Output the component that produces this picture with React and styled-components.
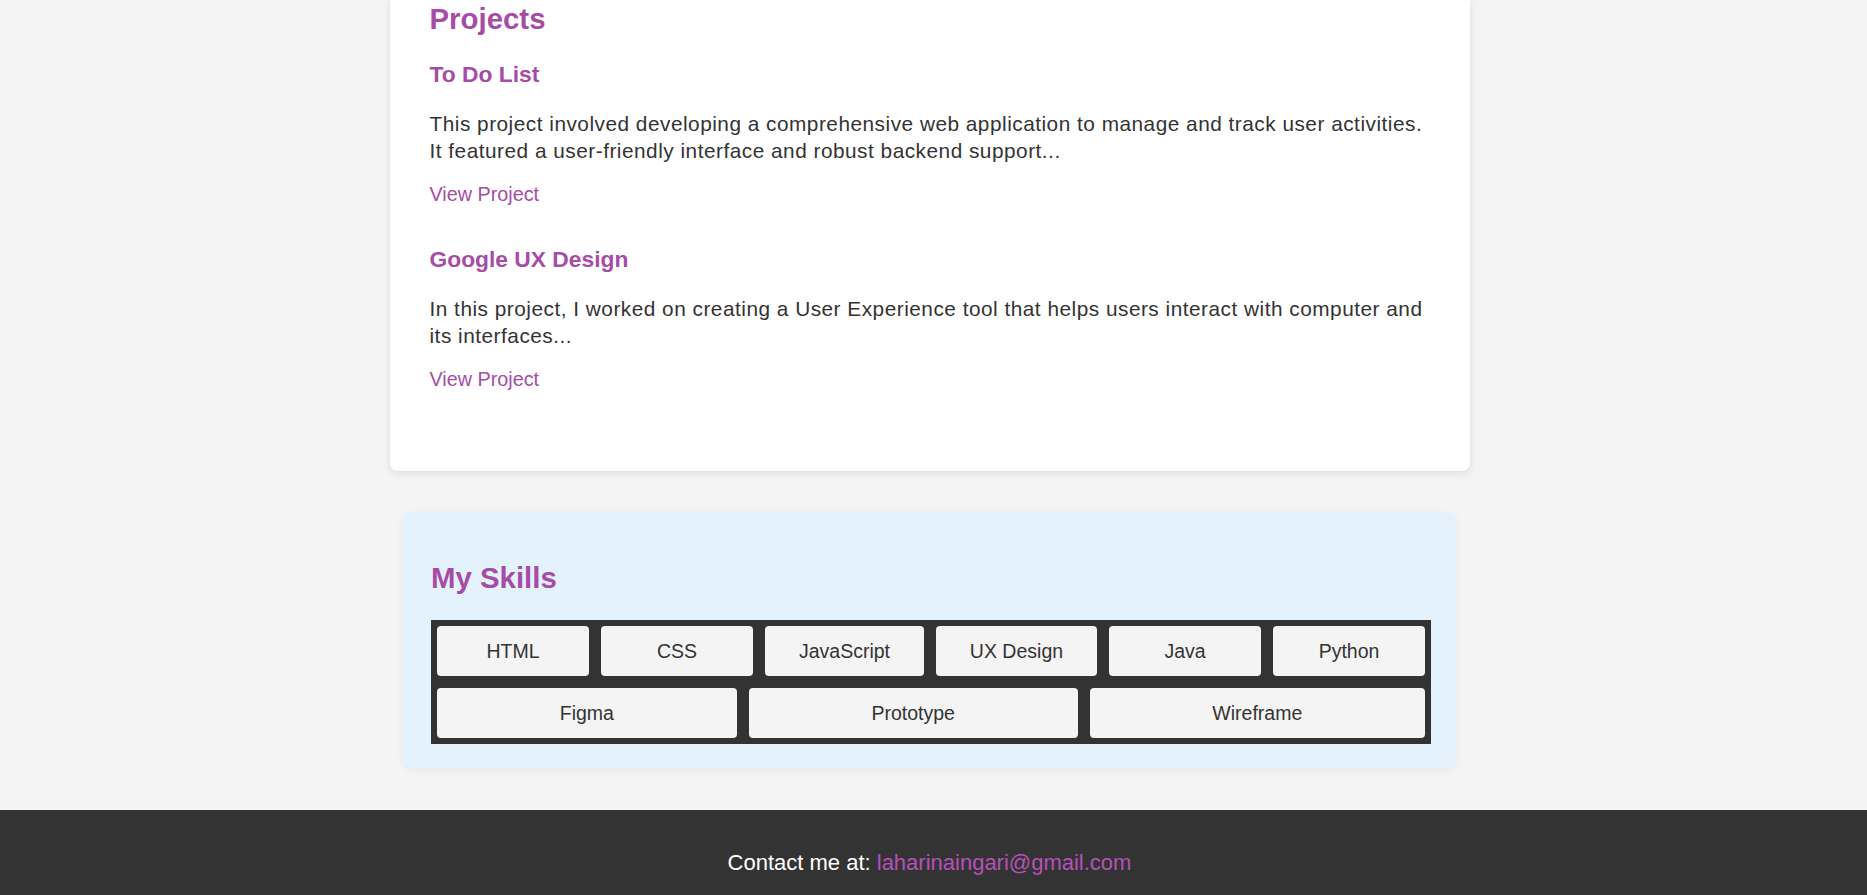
import React from 'react'
import styled, { createGlobalStyle } from 'styled-components'

const GlobalStyle = createGlobalStyle`
  html, body {
    margin: 0;
    padding: 0;
    background: #f4f4f4;
    font-family: "Liberation Sans", Arial, sans-serif;
    color: #333;
  }
  * { box-sizing: border-box; }
`

const purple = '#a64ca6'

const Page = styled.div`
  display: flex;
  flex-direction: column;
  min-height: 895px;
`

const Main = styled.main`
  display: flex;
  flex-direction: column;
  align-items: center;
  gap: 41px;
  padding: 0 8px 41px 0;
`

const ProjectsCard = styled.section`
  width: 1080px;
  background: #fff;
  border-radius: 0 0 8px 8px;
  box-shadow: 0 2px 8px rgba(0, 0, 0, 0.1);
  padding: 2px 40px 40px;
`

const SectionTitle = styled.h2`
  margin: 0 0 25px;
  font-size: 29.4px;
  line-height: 34px;
  font-weight: 700;
  color: ${purple};
`

const Project = styled.article`
  margin-bottom: 40px;
`

const ProjectTitle = styled.h3`
  margin: 0 0 23px;
  font-size: 22.8px;
  line-height: 27px;
  font-weight: 700;
  color: ${purple};
`

const ProjectText = styled.p`
  margin: 0 0 19px;
  font-size: 20.8px;
  line-height: 26.5px;
  letter-spacing: 0.5px;
  color: #333;
`

const ProjectLink = styled.a`
  display: block;
  font-size: 19.8px;
  line-height: 23px;
  color: ${purple};
  text-decoration: none;
`

const SkillsCard = styled.section`
  width: 1053px;
  background: #e3f2fd;
  border-radius: 10px;
  box-shadow: 0 2px 8px rgba(0, 0, 0, 0.06);
  padding: 49px 25px 24px 28px;
`

const SkillGrid = styled.div`
  display: flex;
  flex-wrap: wrap;
  width: 1000px;
  background: #333;
`

const Skill = styled.div`
  flex: 1 1 auto;
  min-width: 152px;
  margin: 6px;
  padding: 14px 20px;
  background: #f4f4f4;
  border-radius: 4px;
  font-size: 19.5px;
  line-height: 22px;
  text-align: center;
  color: #333;
`

const Footer = styled.footer`
  margin-top: auto;
  background: #333;
  color: #fff;
  text-align: center;
  padding: 40px 8px 20px 0;
  font-size: 22px;
  line-height: 25px;
`

const Mail = styled.a`
  color: #b452b8;
  text-decoration: none;
`

const projects = [
  {
    title: 'To Do List',
    text: 'This project involved developing a comprehensive web application to manage and track user activities. It featured a user-friendly interface and robust backend support...',
  },
  {
    title: 'Google UX Design',
    text: 'In this project, I worked on creating a User Experience tool that helps users interact with computer and its interfaces...',
  },
]

const skills = ['HTML', 'CSS', 'JavaScript', 'UX Design', 'Java', 'Python', 'Figma', 'Prototype', 'Wireframe']

export default function App() {
  return (
    <Page>
      <GlobalStyle />
      <Main>
        <ProjectsCard>
          <SectionTitle>Projects</SectionTitle>
          {projects.map(p => (
            <Project key={p.title}>
              <ProjectTitle>{p.title}</ProjectTitle>
              <ProjectText>{p.text}</ProjectText>
              <ProjectLink href="#">View Project</ProjectLink>
            </Project>
          ))}
        </ProjectsCard>

        <SkillsCard>
          <SectionTitle>My Skills</SectionTitle>
          <SkillGrid>
            {skills.map(s => <Skill key={s}>{s}</Skill>)}
          </SkillGrid>
        </SkillsCard>
      </Main>

      <Footer>
        Contact me at: <Mail href="#">laharinaingari@gmail.com</Mail>
      </Footer>
    </Page>
  )
}
